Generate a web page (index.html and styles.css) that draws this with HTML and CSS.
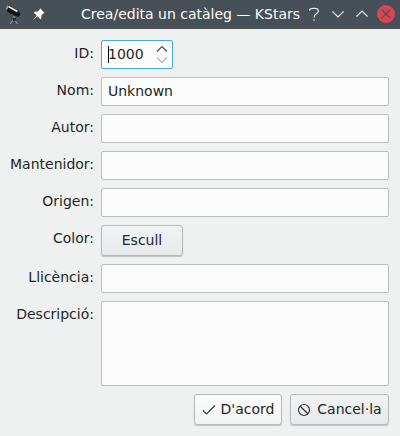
FILE: index.html
```
<!DOCTYPE html>
<html lang="ca">
<head>
<meta charset="utf-8">
<title>Crea/edita un catàleg — KStars</title>
<link rel="stylesheet" href="styles.css">
</head>
<body>
<header class="titlebar">
  <svg class="telescope" width="18" height="22" viewBox="0 0 18 22">
    <path d="M3.500 1 13.500 6.500 15.500 10.500 13 13 4 9 1.200 6z" fill="#111416"/>
    <path d="M3.500 2.500 12.500 7.500" stroke="#e4e6e7" stroke-width="2"/>
    <path d="M3 1.500 1.500 5.500" stroke="#a5abae" stroke-width="1.500"/>
    <path d="M9 12v4M9 15l-4 5M9 15l3.500 5" stroke="#a3a9ac" fill="none"/>
    <path d="M8 14h2.500v3H8z" fill="#1b1f22"/>
  </svg>
  <svg class="pin" width="13" height="13" viewBox="0 0 12 12">
    <path d="M7.500.3 11.700 4.500 10.500 5 8.800 6.700 8.500 9.700 7.700 10.300 5 7.600.5 11.500 4.400 7 1.700 4.300 2.300 3.500 5.300 3.200 7 1.500z" fill="#fcfcfc"/>
  </svg>
  <h1 class="title">Crea/edita un catàleg — KStars</h1>
  <svg class="controls" width="90" height="20" viewBox="0 0 90 20">
    <g fill="none" stroke="#fcfcfc" stroke-width="1.100">
      <path d="M4.500 6.500C4.500 4.800 6 4.300 9 4.300S13.300 5 13.300 7C13.300 10.300 9 9.200 9 13.500M8.300 16h1.500"/>
      <path d="m27.500 7.500 5.500 5.500 5.500-5.500M51.500 12.500l5.500-5.500 5.500 5.500"/>
    </g>
    <circle cx="81" cy="10" r="9" fill="#da4453"/>
    <path d="m76.800 5.800 8.400 8.400m0-8.400-8.400 8.400" stroke="#475057" stroke-width="1.200"/>
  </svg>
</header>
<main class="form">
  <label class="label">ID:</label>
  <div class="field spin"><i class="caret"></i><span>1000</span>
    <svg class="arrows" width="12" height="20" viewBox="0 0 12 20" fill="none">
      <path d="m1 6.500 5-5 5 5" stroke="#4d5356" stroke-width="1.200"/>
      <path d="m1 12.500 5 5 5-5" stroke="#b2b5b6" stroke-width="1.200"/>
    </svg>
  </div>
  <label class="label">Nom:</label><div class="field"><span>Unknown</span></div>
  <label class="label">Autor:</label><div class="field"></div>
  <label class="label">Mantenidor:</label><div class="field"></div>
  <label class="label">Origen:</label><div class="field"></div>
  <label class="label">Color:</label><button class="button choose"><span>Escull</span></button>
  <label class="label">Llicència:</label><div class="field"></div>
  <label class="label">Descripció:</label><div class="field area"></div>
</main>
<footer class="actions">
  <button class="button ok">
    <svg width="14" height="14" viewBox="0 0 14 14" fill="none" stroke="#31363b" stroke-width="1.200"><path d="m1 7.500 3.500 3.500L13 2.500"/></svg>
    <span>D'acord</span>
  </button>
  <button class="button cancel">
    <svg width="14" height="14" viewBox="0 0 14 14" fill="none" stroke="#31363b" stroke-width="1.200"><circle cx="7" cy="7" r="5.500"/><path d="m3 3 8 8"/></svg>
    <span>Cancel·la</span>
  </button>
</footer>
</body>
</html>
```
FILE: styles.css
```
* { box-sizing: border-box; }
body {
  margin: 0;
  width: 400px;
  height: 436px;
  overflow: hidden;
  background: #eff1f0;
  color: #232629;
  font: 14px/16px "DejaVu Sans", sans-serif;
}
.titlebar {
  display: flex;
  align-items: center;
  height: 29px;
  background: #475057;
  padding: 0 5px 1px 5px;
  color: #fcfcfc;
}
.titlebar svg { flex: none; }
.telescope { margin-top: 1px; }
.pin { margin-left: 9px; }
.title {
  flex: 1;
  min-width: 0;
  margin: 0 0 0 36px;
  font-size: 14px;
  font-weight: 400;
  white-space: nowrap;
}
.form {
  display: grid;
  grid-template-columns: 84px 288px;
  gap: 8px 7px;
  padding: 11px 10px 0;
}
.label { text-align: right; padding-top: 5px; white-space: nowrap; }
.field {
  display: flex;
  align-items: center;
  height: 29px;
  padding: 0 6px;
  border: 1px solid #bcbebf;
  border-radius: 2px;
  background: #fcfcfc;
}
.field span, .button span { padding-bottom: 2px; }
.spin { position: relative; width: 72px; border-color: #3daee9; justify-content: space-between; padding-right: 4px; }
.caret { position: absolute; left: 6px; top: 5px; width: 1px; height: 17px; background: #000; }
.area { height: 85px; }
.button {
  display: flex;
  align-items: center;
  justify-content: center;
  height: 31px;
  padding: 0;
  border: 1px solid #b7b9ba;
  border-radius: 3px;
  background: linear-gradient(#f1f2f3, #e8e9ea);
  box-shadow: 0 1px 1px #0003;
  color: inherit;
  font: inherit;
}
.choose { width: 82px; }
.actions {
  display: flex;
  justify-content: flex-end;
  gap: 8px;
  padding: 8px 11px 0 0;
}
.ok { width: 88px; gap: 5px; background: linear-gradient(#fcfcfc, #f3f4f4); }
.cancel { width: 99px; gap: 6px; }
```
